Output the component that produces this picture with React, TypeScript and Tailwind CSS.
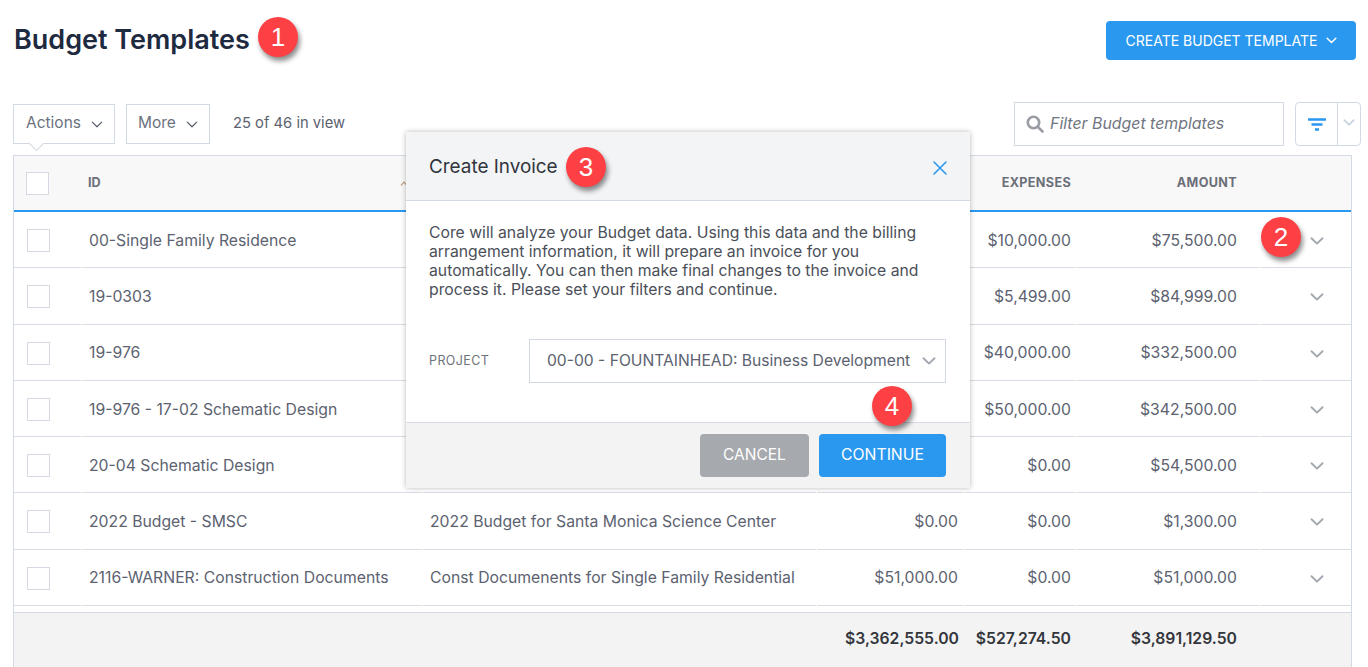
const ROW = "grid grid-cols-[67px_340px_393px_147px_111px_182px_92px] gap-x-px";
const CELL = "flex items-center h-[56.25px] pt-[2px] border-b border-[#d8dde5] text-[15.75px] text-[#5c6270]";

const rows = [
  { id: "00-Single Family Residence", desc: "", a: "", b: "$10,000.00", c: "$75,500.00" },
  { id: "19-0303", desc: "", a: "", b: "$5,499.00", c: "$84,999.00" },
  { id: "19-976", desc: "", a: "", b: "$40,000.00", c: "$332,500.00" },
  { id: "19-976 - 17-02 Schematic Design", desc: "", a: "", b: "$50,000.00", c: "$342,500.00" },
  { id: "20-04 Schematic Design", desc: "", a: "", b: "$0.00", c: "$54,500.00" },
  { id: "2022 Budget - SMSC", desc: "2022 Budget for Santa Monica Science Center", a: "$0.00", b: "$0.00", c: "$1,300.00" },
  { id: "2116-WARNER: Construction Documents", desc: "Const Documenents for Single Family Residential", a: "$51,000.00", b: "$0.00", c: "$51,000.00" },
];

const Chevron = ({ className }: { className: string }) => (
  <svg viewBox="0 0 14 8" fill="none" stroke="currentColor" strokeWidth="1.9" strokeLinecap="round" strokeLinejoin="round" className={className}>
    <path d="M1.5 1.2 7 6.6l5.5-5.4" />
  </svg>
);

const Badge = ({ n, className }: { n: number; className: string }) => (
  <div className={`absolute z-20 flex h-10 w-10 items-center justify-center rounded-full bg-[#fd4044] text-[26px] text-white shadow-[2px_4px_5px_rgba(0,0,0,0.45)] font-['Liberation_Sans',sans-serif] ${className}`}>
    {n}
  </div>
);

const Checkbox = ({ className = "" }: { className?: string }) => (
  <div className={`h-[23px] w-[23px] border border-[#d5dae2] bg-white ${className}`} />
);

export default function App() {
  return (
    <div className="relative h-[667px] w-[1368px] overflow-hidden bg-white font-['Inter',sans-serif]">
      <Badge n={1} className="left-[258px] top-[17px]" />
      <Badge n={2} className="left-[1261px] top-[217px]" />
      <Badge n={3} className="left-[566px] top-[147px]" />
      <Badge n={4} className="left-[872px] top-[386px]" />

      {/* Header */}
      <div className="flex h-[102px] items-start justify-between pl-[14px] pr-[12px] pt-[21px]">
        <h1 className="mt-[1px] text-[27px] leading-[36px] font-semibold text-[#1e2a40]">Budget Templates</h1>
        <button className="flex h-[39px] w-[250px] items-center justify-center gap-[9px] rounded-[4px] bg-[#2b98f0] pl-[1px] text-[14px] text-white">
          CREATE BUDGET TEMPLATE
          <Chevron className="h-[7px] w-[11px]" />
        </button>
      </div>

      {/* Toolbar */}
      <div className="flex h-[53px] items-start pl-[13px] pr-[7px]">
        <div className="relative mt-[2px] flex h-10 w-[102px] items-center gap-[10px] border border-[#d3d9e2] pb-[2px] pl-3 text-[15.5px] text-[#6b7280]">
          Actions
          <Chevron className="mt-[2px] h-[7px] w-3 stroke-[1.5] text-[#5c6270]" />
          <div className="absolute left-[17px] top-[33px] h-[11px] w-[11px] rotate-45 border-b border-r border-[#d3d9e2] bg-white" />
        </div>
        <div className="ml-[11px] mt-[2px] flex h-10 w-[84px] items-center gap-[10px] border border-[#d3d9e2] pb-[2px] pl-[11px] text-[15.5px] text-[#6b7280]">
          More
          <Chevron className="mt-[2px] h-[7px] w-3 stroke-[1.5] text-[#5c6270]" />
        </div>
        <span className="ml-[23px] mt-[10px] text-[14.75px] text-[#5c6270]">25 of 46 in view</span>
        <div className="ml-auto flex h-11 w-[270px] items-center gap-[6px] border border-[#d3d9e2] pl-[11px] text-[15.9px] italic text-[#70757f]">
          <svg viewBox="0 0 18 18" fill="none" stroke="#9a9da3" strokeWidth="2.6" strokeLinecap="round" className="h-[18px] w-[18px]">
            <circle cx="7.5" cy="7.5" r="5.7" />
            <path d="m12 12 4.5 4.5" />
          </svg>
          Filter Budget templates
        </div>
        <div className="ml-[11px] flex h-11 w-[66px] rounded-[4px] border border-[#d3d9e2]">
          <div className="flex w-[42px] items-center justify-center border-r border-[#d3d9e2]">
            <svg viewBox="0 0 18 13" fill="none" stroke="#2b98f0" strokeWidth="2.6" className="h-[13px] w-[18px]">
              <path d="M0 1.5h18M3.5 6.5h11M7 11.5h4" />
            </svg>
          </div>
          <div className="flex flex-1 items-center justify-center pb-[3px]">
            <Chevron className="h-[7px] w-3 text-[#c5d0de]" />
          </div>
        </div>
      </div>

      {/* Table */}
      <div className="ml-[13px] w-[1339px] border-x border-t border-[#d3d9e2]">
        <div className={`${ROW} h-[56px] border-b-2 border-[#2b98f0] bg-[#f8f8f9] text-[12.6px] font-bold text-[#6b6f78]`}>
          <div className="flex items-center pl-3"><Checkbox /></div>
          <div className="flex items-center justify-between pl-[6px] pr-[14px]">
            ID
            <svg viewBox="0 0 8 5" fill="none" stroke="#c9a98c" strokeWidth="1.2" className="h-[5px] w-2">
              <path d="M1 4.5 4 1l3 3.5" />
            </svg>
          </div>
          <div />
          <div />
          <div className="flex items-center justify-end pr-[5px] tracking-[0.35px]">EXPENSES</div>
          <div className="flex items-center justify-end pr-[22px] tracking-[0.35px]">AMOUNT</div>
          <div />
        </div>
        {rows.map((r) => (
          <div key={r.id} className={ROW}>
            <div className={`${CELL} pl-3`}><Checkbox className="ml-px" /></div>
            <div className={`${CELL} pl-[7px]`}>{r.id}</div>
            <div className={`${CELL} pl-[7px]`}>{r.desc}</div>
            <div className={`${CELL} justify-end pr-[6px]`}>{r.a}</div>
            <div className={`${CELL} justify-end pr-[5px]`}>{r.b}</div>
            <div className={`${CELL} justify-end pr-[22px]`}>{r.c}</div>
            <div className={`${CELL} justify-center pl-[22px]`}>
              <Chevron className="mt-[1px] h-[8px] w-[14px] text-[#a3a8b0]" />
            </div>
          </div>
        ))}
        <div className={`${ROW} mt-[6px] h-[56px] items-center border-t border-[#d3d9e2] bg-[#f3f3f4] pb-[2px] text-[15.75px] font-semibold text-[#33363c]`}>
          <div />
          <div />
          <div />
          <div className="pr-[5px] text-right">$3,362,555.00</div>
          <div className="pr-[5px] text-right">$527,274.50</div>
          <div className="pr-[22px] text-right">$3,891,129.50</div>
          <div />
        </div>
      </div>

      {/* Create Invoice modal */}
      <div className="absolute left-[406px] top-[132px] z-10 w-[564px] bg-white shadow-[0_0_5px_rgba(0,0,0,0.28)]">
        <div className="flex h-[69px] items-center justify-between border-b border-[#d3d9e2] bg-[#f3f4f6] pl-[23px] pr-[23px]">
          <span className="pt-[2px] text-[18.9px] text-[#30343d]">Create Invoice</span>
          <svg viewBox="0 0 14 14" fill="none" stroke="#2b98f0" strokeWidth="1.6" strokeLinecap="round" className="mt-[3px] h-[14px] w-[14px]">
            <path d="m1 1 12 12M13 1 1 13" />
          </svg>
        </div>
        <p className="px-[23px] pt-[22px] text-[15.75px] leading-[19px] text-[#4b4f58]">
          Core will analyze your Budget data. Using this data and the billing arrangement information, it will prepare an invoice for you automatically. You can then make final changes to the invoice and process it. Please set your filters and continue.
        </p>
        <div className="mt-[40px] flex h-[44px] items-center pl-[23px] pr-[24px]">
          <span className="w-[100px] text-[12.5px] tracking-[0.4px] text-[#6e727b]">PROJECT</span>
          <div className="flex h-[44px] flex-1 items-center justify-between border border-[#d3d9e2] pl-[17px] pr-[9px] text-[15.65px] text-[#5c6270]">
            00-00 - FOUNTAINHEAD: Business Development
            <Chevron className="h-[8px] w-[14px] text-[#a3a8b0]" />
          </div>
        </div>
        <div className="mt-[39px] flex h-[66px] items-center justify-end gap-[10px] border-t border-[#d8dde5] bg-[#f3f3f4] pb-[1px] pr-[24px]">
          <button className="h-[43px] w-[109px] rounded-[4px] bg-[#a6a9ad] text-[15.5px] text-white">CANCEL</button>
          <button className="h-[43px] w-[127px] rounded-[4px] bg-[#2b98f0] text-[15.75px] text-white">CONTINUE</button>
        </div>
      </div>
    </div>
  );
}
